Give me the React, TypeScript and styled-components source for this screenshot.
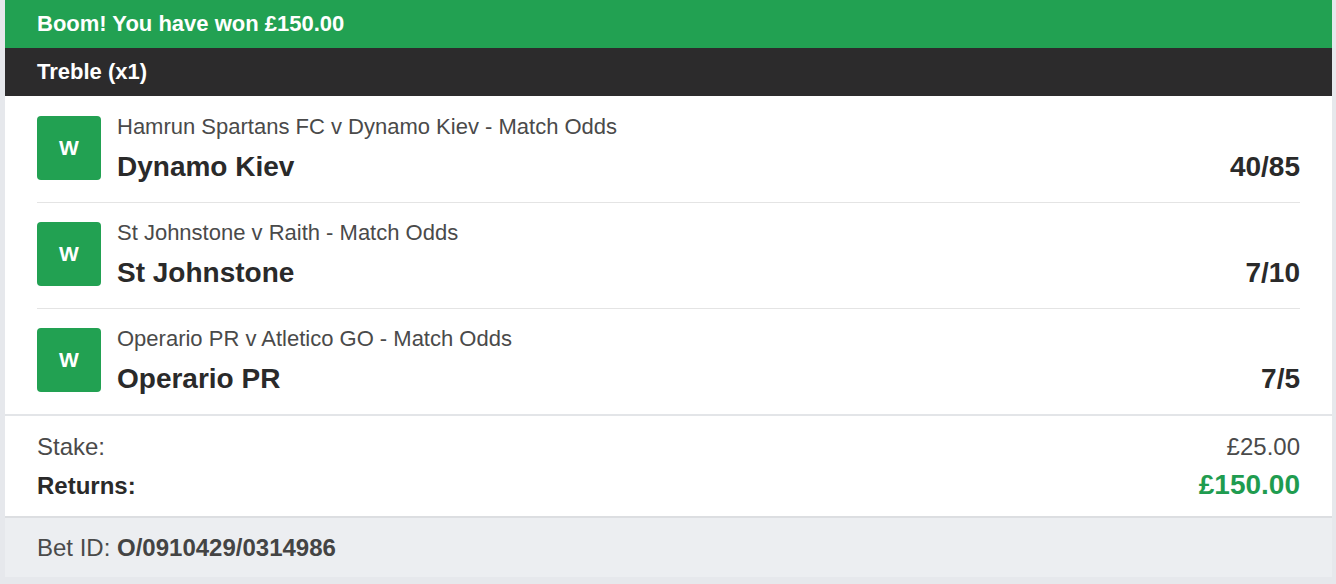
import React from "react";
import styled, { createGlobalStyle } from "styled-components";

const Global = createGlobalStyle`
  html, body { margin: 0; padding: 0; background: #e8eaee; }
  body { font-family: "Liberation Sans", Arial, Helvetica, sans-serif; }
`;

const Page = styled.div`
  width: 1336px;
  height: 584px;
  box-sizing: border-box;
  padding: 0 4px 7px 5px;
  background: #e6e8ec;
`;

const Card = styled.div`
  background: #fff;
  display: flex;
  flex-direction: column;
`;

const Banner = styled.div<{ $tone: "green" | "dark" }>`
  height: 48px;
  display: flex;
  align-items: center;
  padding: 0 32px;
  background: ${(p) => (p.$tone === "green" ? "#22a152" : "#2c2b2c")};
  color: #fff;
  font-weight: 700;
  font-size: 22px;
`;

const Legs = styled.div`
  padding: 0 32px;
  border-bottom: 2px solid #e3e5e8;
`;

const Leg = styled.div`
  display: flex;
  align-items: flex-start;
  gap: 16px;
  padding: 19px 0 22px;
  border-bottom: 1px solid #e4e4e4;
  &:first-child { padding-top: 20px; }
  &:last-child { border-bottom: none; }
`;

const Badge = styled.div`
  width: 64px;
  height: 64px;
  border-radius: 4px;
  background: #22a152;
  color: #fff;
  font-weight: 700;
  font-size: 21px;
  display: flex;
  align-items: center;
  justify-content: center;
  flex-shrink: 0;
`;

const LegBody = styled.div`
  flex: 1;
  height: 64px;
  box-sizing: border-box;
  display: flex;
  flex-direction: column;
  gap: 17px;
  padding-top: 1px;
`;

const Market = styled.div`
  font-size: 22px;
  color: #4a4a4a;
  line-height: 20px;
`;

const SelectionRow = styled.div`
  display: flex;
  justify-content: space-between;
  align-items: baseline;
  font-size: 28px;
  font-weight: 700;
  color: #2a2a2a;
  line-height: 26px;
`;

const Summary = styled.div`
  padding: 16px 32px 15px;
  display: flex;
  flex-direction: column;
  gap: 8px;
  border-bottom: 2px solid #dcdee1;
`;

const SumRow = styled.div<{ $strong?: boolean }>`
  display: flex;
  justify-content: space-between;
  align-items: baseline;
  font-size: 24px;
  line-height: 30px;
  color: ${(p) => (p.$strong ? "#2a2a2a" : "#4a4a4a")};
  font-weight: ${(p) => (p.$strong ? 700 : 400)};
`;

const Value = styled.span<{ $green?: boolean }>`
  font-size: ${(p) => (p.$green ? "28px" : "24px")};
  color: ${(p) => (p.$green ? "#1f9c50" : "#4a4a4a")};
  font-weight: ${(p) => (p.$green ? 700 : 400)};
`;

const Footer = styled.div`
  background: #eceef1;
  height: 59px;
  display: flex;
  align-items: center;
  padding: 0 32px;
  font-size: 24px;
  color: #4a4a4a;
  b { font-weight: 700; color: #444; }
`;

const legs = [
  { market: "Hamrun Spartans FC v Dynamo Kiev - Match Odds", sel: "Dynamo Kiev", odds: "40/85" },
  { market: "St Johnstone v Raith - Match Odds", sel: "St Johnstone", odds: "7/10" },
  { market: "Operario PR v Atletico GO - Match Odds", sel: "Operario PR", odds: "7/5" },
];

export default function App() {
  return (
    <>
      <Global />
      <Page>
        <Card>
          <Banner $tone="green">Boom! You have won £150.00</Banner>
          <Banner $tone="dark">Treble (x1)</Banner>
          <Legs>
            {legs.map((l) => (
              <Leg key={l.sel}>
                <Badge>W</Badge>
                <LegBody>
                  <Market>{l.market}</Market>
                  <SelectionRow>
                    <span>{l.sel}</span>
                    <span>{l.odds}</span>
                  </SelectionRow>
                </LegBody>
              </Leg>
            ))}
          </Legs>
          <Summary>
            <SumRow>
              <span>Stake:</span>
              <Value>£25.00</Value>
            </SumRow>
            <SumRow $strong>
              <span>Returns:</span>
              <Value $green>£150.00</Value>
            </SumRow>
          </Summary>
          <Footer>
            <span>
              Bet ID: <b>O/0910429/0314986</b>
            </span>
          </Footer>
        </Card>
      </Page>
    </>
  );
}
